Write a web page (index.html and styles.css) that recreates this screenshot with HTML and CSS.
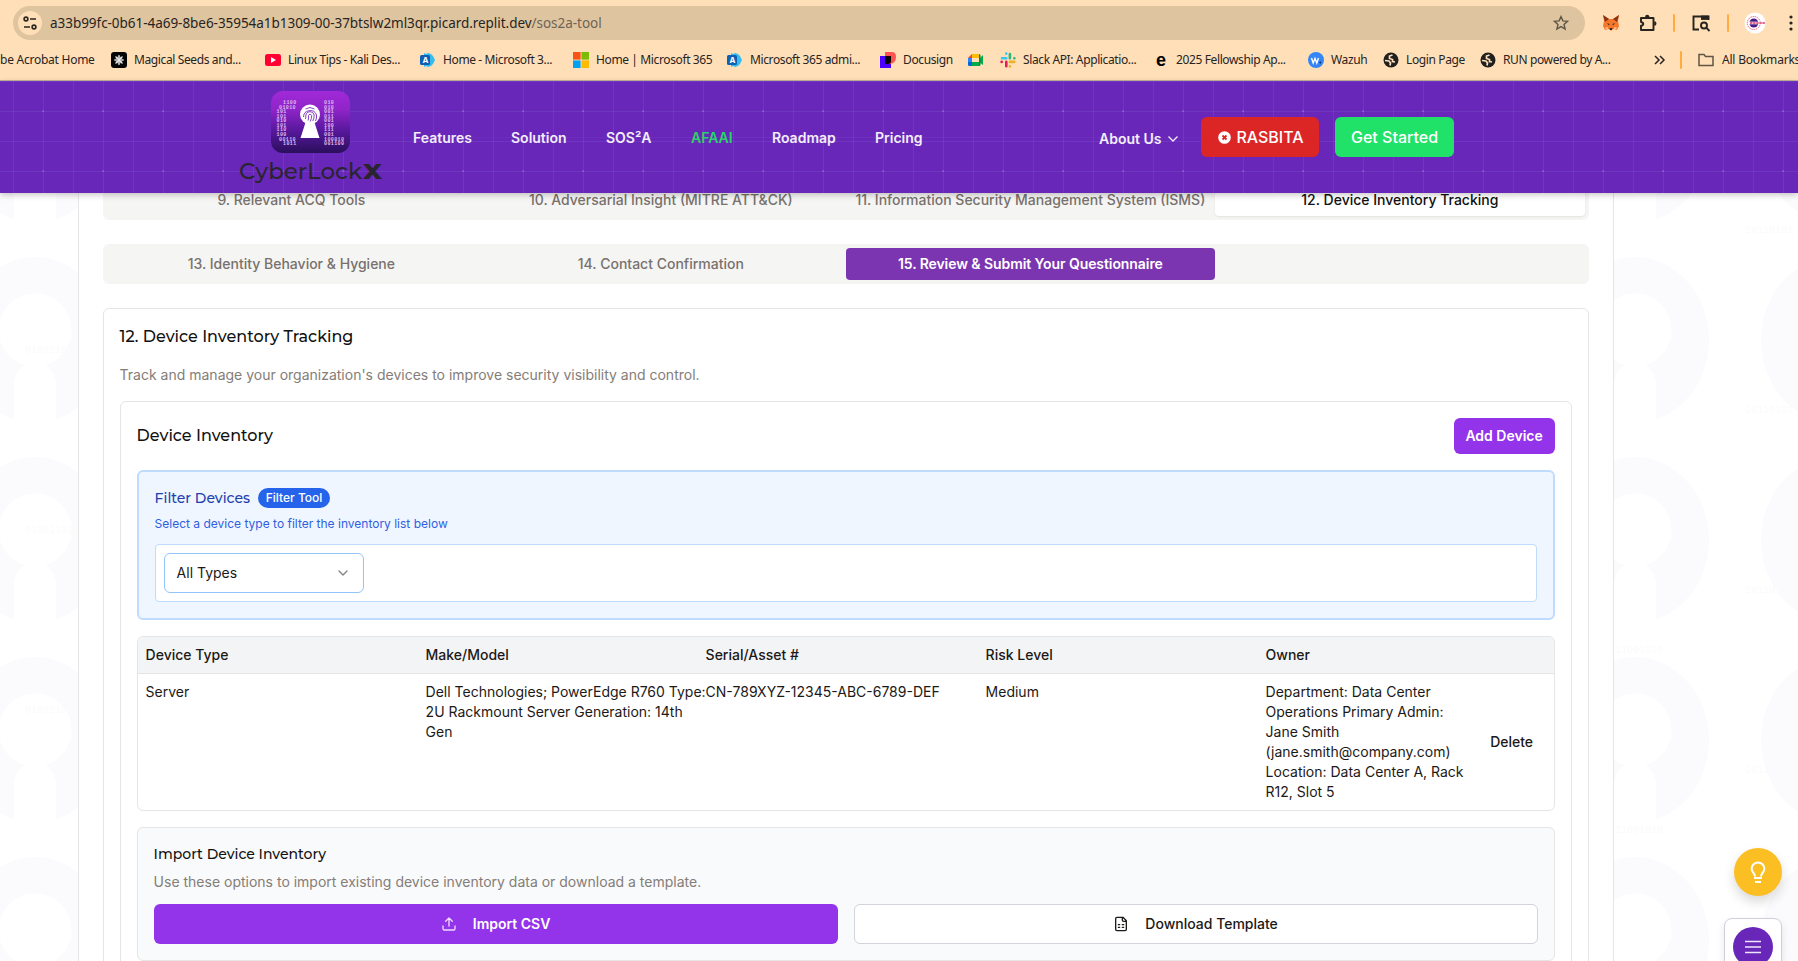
FILE: index.html
```html
<!DOCTYPE html>
<html lang="en">
<head>
<meta charset="utf-8">
<title>SOS²A Tool - Device Inventory Tracking</title>
<link rel="stylesheet" href="styles.css">
</head>
<body>
<div class="window">
  <div class="chrome">
    <div class="toolbar">
      <div class="omnibox">
        <span class="site-info">
          <svg width="16" height="16" viewBox="0 0 16 16" fill="none" stroke="#2b2620" stroke-width="1.6"><circle cx="4" cy="4" r="1.9"/><path d="M8 4h6M2 12h6"/><circle cx="12" cy="12" r="1.9"/></svg>
        </span>
        <span class="url">a33b99fc-0b61-4a69-8be6-35954a1b1309-00-37btslw2ml3qr.picard.replit.dev<span class="path">/sos2a-tool</span></span>
        <svg class="star" width="16" height="16" viewBox="0 0 16 16" fill="none" stroke="#5f5647" stroke-width="1.4"><path d="M8 1.6l1.9 4.3 4.7.4-3.6 3.1 1.1 4.6L8 11.6 3.900 14 5 9.400 1.400 6.300l4.700-.4z"/></svg>
      </div>
      <div class="tools">
        <svg class="t-fox" width="18" height="18" viewBox="0 0 18 18"><path d="M1 1l6 4h4l6-4-1 6 1 5-2 4-4-1-2 2-2-2-4 1-2-4 1-5z" fill="#f5782a"/><path d="M1 1l6 4-4 3zM17 1l-6 4 4 3z" fill="#8a3316"/><path d="M5 9l2.500 1-.5 1.500zM13 9l-2.500 1 .5 1.500z" fill="#2b2b33"/><path d="M2.500 14l3-1 1 3zM15.500 14l-3-1-1 3z" fill="#ffc38f"/><path d="M7.500 14h3l-.5 2h-2z" fill="#3b2a2a"/></svg>
        <svg class="t-ext" width="18" height="18" viewBox="0 0 18 18" fill="none" stroke="#27241f" stroke-width="1.900" stroke-linejoin="round"><path d="M2 4h12.500v12H2v-4.200c3-.6 3-3.200 0-3.800z"/><path d="M6.800 3a1.500 1.500 0 0 1 3 0M15.300 8a1.500 1.500 0 0 1 0 3" fill="#27241f" stroke-width="1.400"/></svg>
        <i class="rule"></i>
        <svg class="t-search" width="20" height="18" viewBox="0 0 20 18" fill="none" stroke="#27241f" stroke-width="1.900"><path d="M8 15.500H2.500v-13h15V6"/><path d="M10 1.600h7.600v4.300H10z" fill="#27241f" stroke="none"/><circle cx="13" cy="11.500" r="3"/><path d="M15.200 13.700l3.300 3.300"/></svg>
        <i class="rule"></i>
        <svg class="t-avatar" width="22" height="22" viewBox="0 0 22 22"><circle cx="11" cy="11" r="10.500" fill="#fff"/><circle cx="9.800" cy="11" r="6.500" fill="none" stroke="#e8638a" stroke-width="1" stroke-dasharray="1.500 .7"/><circle cx="9.800" cy="11" r="4.500" fill="#4a1a86"/><path d="M4 9.700h14.500v2.600H4z" fill="#fff"/><path d="M6 11h15" stroke="#d9376a" stroke-width="1.300" stroke-dasharray="2.500 .6"/></svg>
        <svg class="t-menu" width="6" height="18" viewBox="0 0 6 18" fill="#27241f"><circle cx="3" cy="3" r="1.600"/><circle cx="3" cy="9" r="1.600"/><circle cx="3" cy="15" r="1.600"/></svg>
      </div>
    </div>
    <div class="bookmarks">
      <span class="bm b0">be Acrobat Home</span>
      <span class="bm b1"><svg width="16" height="16" viewBox="0 0 16 16"><rect width="16" height="16" rx="3" fill="#050505"/><path d="M8 3v10M3 8h10M4.500 4.500l7 7M11.500 4.500l-7 7" stroke="#e8e8e8" stroke-width="1.200"/><circle cx="8" cy="8" r="3.200" fill="none" stroke="#e8e8e8" stroke-width=".8"/></svg>Magical Seeds and...</span>
      <span class="bm b2"><svg width="16" height="16" viewBox="0 0 16 16"><rect y="2" width="16" height="12" rx="2.500" fill="#ff0033"/><path d="M6 5l5 3-5 3z" fill="#fff"/></svg>Linux Tips - Kali Des...</span>
      <span class="bm b3"><svg width="16" height="16" viewBox="0 0 16 16"><path d="M4 1l2 1 2-1 3 1 2 2 2 4-2 4-2 2-3 1-2-1-2 1z" fill="#35bdf0"/><rect y="3" width="10" height="10" rx="1.500" fill="#0f5fb5"/><text x="2.400" y="11" class="ico-a">A</text></svg>Home - Microsoft 3...</span>
      <span class="bm b4"><svg width="16" height="16" viewBox="0 0 16 16"><path fill="#f65314" d="M0 0h7.600v7.600H0z"/><path fill="#7cbb00" d="M8.400 0H16v7.600H8.400z"/><path fill="#00a1f1" d="M0 8.400h7.600V16H0z"/><path fill="#ffbb00" d="M8.400 8.400H16V16H8.400z"/></svg>Home | Microsoft 365</span>
      <span class="bm b5"><svg width="16" height="16" viewBox="0 0 16 16"><path d="M4 1l2 1 2-1 3 1 2 2 2 4-2 4-2 2-3 1-2-1-2 1z" fill="#35bdf0"/><rect y="3" width="10" height="10" rx="1.500" fill="#0f5fb5"/><text x="2.400" y="11" class="ico-a">A</text></svg>Microsoft 365 admi...</span>
      <span class="bm b6"><svg width="16" height="16" viewBox="0 0 16 16"><path d="M0 4h11v12H0z" fill="#4c00ff"/><path d="M5 0h7q4 0 4 5 0 7-7 7H5z" fill="#ff5252"/><path d="M5 4h6v5q0 3-3 3H5z" fill="#050505"/></svg>Docusign</span>
      <span class="bm b7"><svg width="16" height="16" viewBox="0 0 16 16"><path d="M4 2h7v4H4z" fill="#fbbc04"/><path d="M0 6l4-4v4z" fill="#ea4335"/><path d="M0 6h4v4H0z" fill="#2684fc"/><path d="M0 10h4v4H1.500Q0 14 0 12.500z" fill="#0066da"/><path d="M4 10h7V7l4-4v10l-4-3v4H4z" fill="#00ac47"/><path d="M11 2q1.500 0 1.500 1.500v9Q12.500 14 11 14z" fill="#188038"/></svg></span>
      <span class="bm b8"><svg width="16" height="16" viewBox="0 0 16 16" stroke-width="2.600" stroke-linecap="round"><path d="M6.300 1.500v.1M2 6.300h4.300" stroke="#36c5f0"/><path d="M9.900 2v4.300M14.300 6.300h.1" stroke="#2eb67d"/><path d="M9.900 9.900h4.300M9.900 14.300v.1" stroke="#ecb22e"/><path d="M6.300 9.900v4.300M1.600 9.900h.1" stroke="#e01e5a"/></svg>Slack API: Applicatio...</span>
      <span class="bm b9"><b class="e">e</b>2025 Fellowship Ap...</span>
      <span class="bm b10"><svg width="16" height="16" viewBox="0 0 16 16"><circle cx="8" cy="8" r="8" fill="#3585f7"/><path d="M3.500 6l1.700 5L7 6.500 8.800 11l1.700-5" fill="none" stroke="#fff" stroke-width="1.400"/><circle cx="12.300" cy="10.500" r=".9" fill="#052a6b"/></svg>Wazuh</span>
      <span class="bm b11"><svg width="16" height="16" viewBox="0 0 16 16"><circle cx="8" cy="8" r="7.500" fill="#1f1f1f"/><path d="M9.500 3L6.500 4v2.500l3 1v2L12 10M2 8.500l4 .5 1.500 2-.5 2.500" fill="none" stroke="#ffdfb8" stroke-width="1.700"/></svg>Login Page</span>
      <span class="bm b12"><svg width="16" height="16" viewBox="0 0 16 16"><circle cx="8" cy="8" r="7.500" fill="#1f1f1f"/><path d="M9.500 3L6.500 4v2.500l3 1v2L12 10M2 8.500l4 .5 1.500 2-.5 2.500" fill="none" stroke="#ffdfb8" stroke-width="1.700"/></svg>RUN powered by A...</span>
      <span class="bm b13"><svg width="12" height="10" viewBox="0 0 12 10" fill="none" stroke="#27241f" stroke-width="1.500"><path d="M1 1l4 4-4 4M6 1l4 4-4 4"/></svg></span>
      <i class="rule b14"></i>
      <span class="bm b15"><svg width="16" height="14" viewBox="0 0 16 14" fill="none" stroke="#5f5647" stroke-width="1.500"><path d="M1 1.500h5l1.500 2H15v9H1z"/></svg>All Bookmarks</span>
    </div>
  </div>

  <header class="site-header">
    <a class="logo">
      <svg width="150" height="104" viewBox="0 0 150 104">
        <defs><linearGradient id="tile" x1="0" y1="0" x2="0" y2="1"><stop offset="0" stop-color="#a12ad8"/><stop offset=".3" stop-color="#8f24c8"/><stop offset=".65" stop-color="#55189a"/><stop offset="1" stop-color="#2a0f5c"/></linearGradient></defs>
        <rect x="35" y="4" width="79" height="62" rx="12" fill="url(#tile)"/>
        <g class="bits"><text x="47" y="17">1100</text><text x="43" y="21.500">01010</text><text x="40.500" y="26">101</text><text x="40.500" y="30.500">101</text><text x="40.500" y="35">010</text><text x="40.500" y="39.500">101</text><text x="40.500" y="44">110</text><text x="40.500" y="48.500">100</text><text x="43" y="53.500">00110</text><text x="47" y="58">1011</text>
        <text x="88" y="17">010</text><text x="88" y="21.500">010</text><text x="88" y="26">001</text><text x="88" y="30.500">011</text><text x="88" y="35">001</text><text x="88" y="39.500">100</text><text x="88" y="44">111</text><text x="88" y="48.500">001</text><text x="88" y="53.500">100010</text><text x="88" y="58">001100</text></g>
        <circle cx="74" cy="27.500" r="10" fill="#fff"/><path d="M70 34h8l5.500 17H64.500z" fill="#fff"/>
        <g fill="none" stroke="#7a2cb8" stroke-width=".9"><path d="M67.500 30a6.700 6.700 0 0 1 13-2q.5 3-1 6M69.500 32q.5-2 .3-4a4.300 4.300 0 0 1 8.400 0q.2 3-1.500 6M72 33.500q1-2.500.5-5a1.700 1.700 0 0 1 3.200 0q0 3-1.500 6M69.500 22q4.500-3 9 0"/></g>
        <text class="word" x="3" y="91.500" textLength="123" lengthAdjust="spacingAndGlyphs">CyberLock</text><text class="word x" x="127" y="91.500" textLength="19" lengthAdjust="spacingAndGlyphs">X</text>
      </svg>
    </a>
    <nav class="nav">
      <a class="n1">Features</a><a class="n2">Solution</a><a class="n3">SOS²A</a><a class="n4">AFAAI</a><a class="n5">Roadmap</a><a class="n6">Pricing</a>
    </nav>
    <div class="actions">
      <a class="about">About Us<svg width="12" height="12" viewBox="0 0 12 12" fill="none" stroke="#f3eefa" stroke-width="1.300"><path d="M1.500 3.500L6 8l4.500-4.500"/></svg></a>
      <a class="btn red"><svg width="13" height="13" viewBox="0 0 13 13"><circle cx="6.500" cy="6.500" r="6.300" fill="#fff"/><path d="M4.500 4.500l4 4M8.500 4.500l-4 4" stroke="#dc2626" stroke-width="1.800"/></svg>RASBITA</a>
      <a class="btn green">Get Started</a>
    </div>
  </header>

  <main class="page">
    <svg class="pattern" width="1798" height="768">
      <defs>
        <pattern id="keys" x="-65" y="47" width="200" height="200" patternUnits="userSpaceOnUse">
          <path fill="#fbfbfe" fill-rule="evenodd" d="M79 97.500A74 83 0 1 1 121 97.500V60Q119 48 110 43A36.500 36.500 0 1 0 90 43Q81 48 79 60z" transform="translate(0 82)"/>
        </pattern>
        <pattern id="digits" x="-65" y="0" width="300" height="180" patternUnits="userSpaceOnUse"><text class="faint" x="10" y="40">10110101</text><text class="faint" x="180" y="100">11001010</text><text class="faint" x="90" y="160">01001101</text></pattern>
      </defs>
      <rect width="1798" height="768" fill="url(#keys)"/><rect width="1798" height="768" fill="url(#digits)"/>
    </svg>
    <section class="shell">
      <div class="tabs first"><a>9. Relevant ACQ Tools</a><a>10. Adversarial Insight (MITRE ATT&amp;CK)</a><a>11. Information Security Management System (ISMS)</a><a class="active">12. Device Inventory Tracking</a></div>
      <div class="tabs"><a>13. Identity Behavior &amp; Hygiene</a><a>14. Contact Confirmation</a><a class="submit">15. Review &amp; Submit Your Questionnaire</a></div>
      <div class="panel">
        <h2>12. Device Inventory Tracking</h2>
        <p class="muted lead">Track and manage your organization's devices to improve security visibility and control.</p>
        <div class="card">
          <div class="card-head"><h3>Device Inventory</h3><button class="add">Add Device</button></div>
          <div class="filter">
            <div class="filter-title"><h4>Filter Devices</h4><span class="badge">Filter Tool</span></div>
            <p>Select a device type to filter the inventory list below</p>
            <div class="filter-body"><div class="select">All Types<svg width="16" height="16" viewBox="0 0 24 24" fill="none" stroke="#868380" stroke-width="2" stroke-linecap="round" stroke-linejoin="round"><path d="M6 9l6 6 6-6"/></svg></div></div>
          </div>
          <div class="table">
            <div class="row head"><span>Device Type</span><span>Make/Model</span><span>Serial/Asset #</span><span>Risk Level</span><span>Owner</span></div>
            <div class="row"><span>Server</span><span>Dell Technologies; PowerEdge R760 Type:<br>2U Rackmount Server Generation: 14th<br>Gen</span><span>CN-789XYZ-12345-ABC-6789-DEF</span><span>Medium</span><div class="owner"><span>Department: Data Center<br>Operations Primary Admin:<br>Jane Smith<br>(jane.smith@company.com)<br>Location: Data Center A, Rack<br>R12, Slot 5</span><button class="delete">Delete</button></div></div>
          </div>
          <div class="import">
            <h4>Import Device Inventory</h4>
            <p class="muted">Use these options to import existing device inventory data or download a template.</p>
            <div class="import-actions">
              <button class="primary"><svg width="16" height="16" viewBox="0 0 24 24" fill="none" stroke="#f0dcff" stroke-width="2" stroke-linecap="round" stroke-linejoin="round"><path d="M21 15v4a2 2 0 0 1-2 2H5a2 2 0 0 1-2-2v-4M17 8l-5-5-5 5M12 3v12"/></svg>Import CSV</button>
              <button class="outline"><svg width="16" height="16" viewBox="0 0 24 24" fill="none" stroke="#1c1917" stroke-width="2" stroke-linecap="round" stroke-linejoin="round"><path d="M15 2H6a2 2 0 0 0-2 2v16a2 2 0 0 0 2 2h12a2 2 0 0 0 2-2V7zM14 2v4a2 2 0 0 0 2 2h4M8 13h2M14 13h2M8 17h2M14 17h2"/></svg>Download Template</button>
            </div>
          </div>
        </div>
      </div>
    </section>
  </main>
  <div class="fab bulb"><svg width="24" height="24" viewBox="0 0 24 24" fill="none" stroke="#fff" stroke-width="2"><path d="M9 16.500c0-1.500-.6-2.400-1.500-3.500A6.100 6.100 0 0 1 5.700 8.700a6.300 6.300 0 0 1 12.600 0A6.100 6.100 0 0 1 16.500 13c-.9 1.100-1.500 2-1.500 3.500M8 18h8M9 22h6"/></svg></div>
  <div class="dock"><span><svg width="16" height="14" viewBox="0 0 16 14" stroke="#eee6fa" stroke-width="1.600"><path d="M0 1.500h16M0 7h16M0 12.500h16"/></svg></span></div>
</div>
</body>
</html>
```
FILE: styles.css
```css
* { box-sizing: border-box; margin: 0; }
body { width: 1798px; height: 961px; overflow: hidden; font: 14px/20px Inter, sans-serif; color: #1c1917; }
svg { flex: none; display: block; }
h2, h3, h4 { font-weight: 500; font-family: Montserrat, Lato, sans-serif; color: #111; white-space: nowrap; }
button { font: inherit; border: 0; padding: 0; }
.window { position: relative; width: 1798px; height: 961px; overflow: hidden; display: flex; flex-direction: column; background: #fff; }

/* browser chrome */
.chrome { flex: none; height: 81px; background: #ffdfb8; border-bottom: 1px solid #c4b29a; font-family: "Noto Sans", sans-serif; color: #27241f; }
.toolbar { display: flex; align-items: center; height: 34px; margin: 6px 0 0 13px; }
.omnibox { display: flex; align-items: center; width: 1572px; height: 34px; border-radius: 17px; background: #dfc4a0; padding: 0 16px 0 5px; }
.site-info { width: 24px; height: 24px; border-radius: 50%; background: #ffdfb8; display: grid; place-items: center; margin-right: 8px; }
.url { flex: 1; font-size: 13.5px; letter-spacing: -.04px; white-space: nowrap; }
.path { color: #6e6455; }
.tools { display: flex; align-items: center; }
.t-fox { margin-left: 17px; }
.t-ext { margin-left: 19px; }
.rule { display: block; width: 2px; height: 18px; background: #ffab40; border-radius: 1px; }
.t-ext + .rule { margin-left: 16px; }
.t-search { margin-left: 16px; }
.t-search + .rule { margin-left: 16px; }
.t-avatar { margin-left: 15px; }
.t-menu { margin-left: 22px; }
.bookmarks { display: grid; grid-template-columns: 111px 154px 155px 153px 154px 153px 88px 32px 154px 154px 75px 97px 174px 26px 18px 100px; align-items: center; height: 40px; font-size: 12px; }
.bm { display: flex; align-items: center; gap: 7px; white-space: nowrap; letter-spacing: -.38px; }
.b0 { letter-spacing: -.25px; }
.b15 { letter-spacing: -.2px; gap: 8px; }
.ico-a { font: bold 8px Inter, sans-serif; fill: #fff; letter-spacing: 0; }
.e { font: 900 18px/16px "Liberation Sans", sans-serif; width: 8px; margin: 0 5px 0 2px; color: #000; }

/* site header */
.site-header { position: relative; z-index: 2; flex: none; height: 112px; display: flex; box-shadow: 0 2px 6px rgba(0,0,0,.22);
  background:
    radial-gradient(circle at 1px 1px, rgba(255,255,255,.14) 1px, transparent 1.500px) 42px 29px / 60px 60px,
    linear-gradient(90deg, transparent, rgba(255,255,255,.05), transparent) 83px 56px / 1524px 1px no-repeat,
    linear-gradient(90deg, rgba(180,185,255,.1) 1px, transparent 1px) 13px 0 / 30px 30px,
    linear-gradient(rgba(180,185,255,.1) 1px, transparent 1px) 0 0 / 30px 30px,
    #6827b9; }
.logo { margin: 6px 0 0 236px; width: 150px; }
.bits { font: bold 5px "Liberation Mono", monospace; fill: #dcb8f0; letter-spacing: .4px; }
.word { font: 500 22px Montserrat, Inter, sans-serif; fill: #2a2430; }
.word.x { font-weight: 800; }
.nav { display: grid; grid-template-columns: 98px 95px 85px 81px 103px 60px; align-items: center; margin-left: 27px; height: 114px; font-weight: 600; color: #f3eefa; width: 686px; }
.n4 { color: #2bd46a; }
.actions { display: flex; align-items: center; height: 112px; white-space: nowrap; }
.about { display: flex; align-items: center; gap: 6px; width: 102px; font-weight: 600; color: #f3eefa; padding-top: 4px; }
.btn { display: flex; align-items: center; justify-content: center; gap: 5px; height: 40px; border-radius: 6px; font-size: 16px; font-weight: 500; color: #fff; }
.red { width: 118px; background: #dc2626; margin-right: 16px; padding-left: 2px; }
.green { width: 119px; background: #20e268; }

.page { position: relative; flex: 1; overflow: hidden; background: #fff; margin-top: -20px; padding-top: 20px; }
.pattern { position: absolute; left: 0; top: 20px; }
.faint { font: 10px "Liberation Mono", monospace; fill: #fafafb; }
.shell { position: relative; margin-left: 77.6px; width: 1536px; height: 900px; background: #fff; border: solid #e5e5e5; border-width: 0 1px; padding: 0 24px; }
.tabs { display: grid; grid-template-columns: repeat(4, 1fr); height: 40px; padding: 4px; border-radius: 6px; background: #f5f5f4; font-weight: 500; color: #78716c; margin-bottom: 24px; }
.tabs.first { margin-top: -13px; }
.tabs a { display: grid; place-items: center; border-radius: 4px; white-space: nowrap; }
.tabs .active { background: #fff; color: #111; box-shadow: 0 1px 2px rgba(0,0,0,.08); }
.tabs .submit { background: #7c35b0; color: #fff; font-weight: 600; letter-spacing: -.08px; }
.panel { border: 1px solid #e5e5e5; border-radius: 6px; padding: 16px; height: 800px; }
h2 { font-size: 16px; line-height: 24px; }
.muted { color: #847d78; }
.lead { margin: 16px 0 16px; }
.card { border: 1px solid #e5e5e5; border-radius: 6px; padding: 16px; height: 700px; }
.card-head { display: flex; justify-content: space-between; height: 36px; margin-bottom: 16px; }
h3 { font-size: 16px; line-height: 36px; }
.add { width: 101px; height: 36px; border-radius: 6px; background: #9333ea; color: #fff; font-weight: 600; }
.filter { height: 150px; border: 2px solid #bfdbfe; border-radius: 6px; background: #eff6ff; padding: 16px; margin-bottom: 16px; }
.filter-title { display: flex; align-items: center; gap: 8px; height: 20px; }
h4 { font-size: 14px; line-height: 20px; }
.filter h4 { color: #1e40af; }
.badge { width: 72px; height: 20px; border-radius: 10px; background: #2563eb; color: #fff; font-size: 12px; font-weight: 500; text-align: center; }
.filter p { font-size: 12px; line-height: 16px; margin: 8px 0 12px; color: #2f5fe0; }
.filter-body { height: 58px; border: 1px solid #bfdbfe; border-radius: 4px; background: #fff; padding: 8px; }
.select { width: 200px; height: 40px; border: 1px solid #93c5fd; border-radius: 6px; padding: 0 12px; display: flex; align-items: center; justify-content: space-between; }
.table { border: 1px solid #e5e5e5; border-radius: 6px; overflow: hidden; margin-bottom: 16px; }
.row { display: grid; grid-template-columns: repeat(5, 280px); padding: 8px; white-space: nowrap; }
.head { height: 37px; background: #f3f4f6; border-bottom: 1px solid #e5e5e5; font-weight: 500; }
.owner { display: flex; align-items: center; justify-content: space-between; }
.delete { width: 68px; background: none; color: #1c1917; font-weight: 500; }
.import { height: 134px; border: 1px solid #e5e5e5; border-radius: 6px; background: #f9fafb; padding: 16px; }
.import .muted { margin: 8px 0 12px; }
.import-actions { display: grid; grid-template-columns: 684px 684px; gap: 16px; }
.import-actions button { display: flex; align-items: center; justify-content: center; gap: 16px; height: 40px; border-radius: 6px; font-weight: 500; }
.import-actions .primary { background: #9333ea; color: #fff; font-weight: 600; }
.import-actions .outline { background: #fff; border: 1px solid #d1d5db; color: #1c1917; }

/* floating controls */
.fab, .dock { position: absolute; z-index: 3; }
.bulb { left: 1734px; top: 848px; width: 48px; height: 48px; border-radius: 50%; background: #fbbf24; display: grid; place-items: center; box-shadow: 0 6px 12px rgba(0,0,0,.15); }
.dock { left: 1724px; top: 918px; width: 58px; height: 60px; border: 1px solid #d1d0da; border-radius: 8px; background: #fff; padding: 8px; box-shadow: 0 4px 8px rgba(0,0,0,.1); }
.dock span { display: grid; place-items: center; width: 40px; height: 40px; border-radius: 50%; background: #6827b9; }
```
